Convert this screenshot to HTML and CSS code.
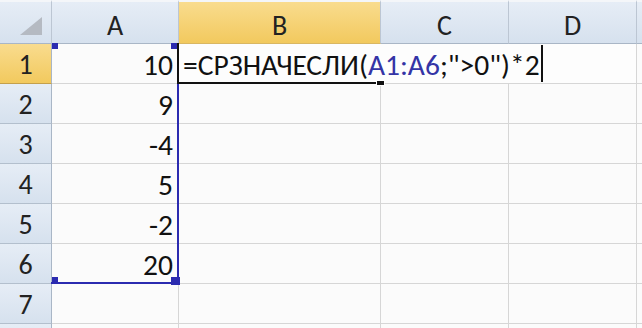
FILE: index.html
```html
<!DOCTYPE html>
<html lang="ru">
<head>
    <meta charset="UTF-8">
    <title>СРЗНАЧЕСЛИ</title>
    <link rel="stylesheet" href="styles.css">
</head>
<body>
    <div class="sheet">
        <!-- заголовки столбцов -->
        <div class="hd corner">
            <svg width="24" height="19" viewBox="0 0 24 19"><polygon points="23,0 23,18 1,18" fill="#b5bac2"/></svg>
        </div>
        <div class="hd col">A</div>
        <div class="hd col sel">B</div>
        <div class="hd col">C</div>
        <div class="hd col">D</div>
        <div class="hd col"></div>

        <!-- строка 1 -->
        <div class="hd row sel">1</div>
        <div class="cell num">10</div>
        <div class="cell wide"><span class="f">=СРЗНАЧЕСЛИ(</span><span class="ref">A1:A6</span><span class="f">;"&gt;0")*2</span><span class="caret"></span></div>
        <div class="cell"></div>

        <div class="hd row">2</div>
        <div class="cell num">9</div>
        <div class="cell"></div><div class="cell"></div><div class="cell"></div><div class="cell"></div>

        <div class="hd row">3</div>
        <div class="cell num">-4</div>
        <div class="cell"></div><div class="cell"></div><div class="cell"></div><div class="cell"></div>

        <div class="hd row">4</div>
        <div class="cell num">5</div>
        <div class="cell"></div><div class="cell"></div><div class="cell"></div><div class="cell"></div>

        <div class="hd row">5</div>
        <div class="cell num">-2</div>
        <div class="cell"></div><div class="cell"></div><div class="cell"></div><div class="cell"></div>

        <div class="hd row">6</div>
        <div class="cell num">20</div>
        <div class="cell"></div><div class="cell"></div><div class="cell"></div><div class="cell"></div>

        <div class="hd row">7</div>
        <div class="cell"></div><div class="cell"></div><div class="cell"></div><div class="cell"></div><div class="cell"></div>

        <div class="hd row"></div>
        <div class="cell"></div><div class="cell"></div><div class="cell"></div><div class="cell"></div><div class="cell"></div>

        <!-- выделенный диапазон A1:A6 -->
        <div class="range">
            <i class="h tl"></i><i class="h tr"></i><i class="h bl"></i><i class="h br"></i>
        </div>
        <!-- активная ячейка B1 -->
        <div class="active"><i class="fill"></i></div>
    </div>
</body>
</html>
```

FILE: styles.css
```css
body {
    margin: 0;
    background: #fbfbfb;
    overflow: hidden;
}
.sheet {
    position: relative;
    display: grid;
    grid-template-columns: 52px 127px 202px 128px 128px 20px;
    grid-template-rows: 44px repeat(8, 40px);
    width: 642px;
    height: 328px;
    overflow: hidden;
    font-family: Carlito, "Liberation Sans Narrow", "Liberation Sans", sans-serif;
    color: #111;
}
.sheet > div {
    box-sizing: border-box;
}
.hd {
    display: flex;
    align-items: center;
    justify-content: center;
    background: linear-gradient(#e6edf6, #d6e1ee);
    border-right: 1px solid #bcc6d3;
    border-bottom: 1px solid #b3bfcd;
    font-size: 28px;
    color: #222;
}
.hd.col {
    padding-top: 6px;
    border-top: 2px solid #f4f6f9;
    border-bottom-color: #a9b6c6;
}
.hd.corner {
    border-top: 2px solid #f4f6f9;
    border-bottom-color: #a9b6c6;
    justify-content: flex-end;
    align-items: flex-end;
    padding: 0 8px 7px 0;
}
.hd.row {
    padding-top: 2px;
    border-right-color: #a9b6c6;
}
.hd.sel {
    background: linear-gradient(#f9dc8e, #f2c95e);
}
.hd.row.sel {
    border-bottom-color: #c4a04c;
}
.hd.col.sel {
    border-bottom-color: #d9b763;
}
.cell {
    border-right: 1px solid #d6d6d6;
    border-bottom: 1px solid #d6d6d6;
    font-size: 29.5px;
    display: flex;
    align-items: center;
    padding-top: 2px;
    white-space: nowrap;
}
.num {
    justify-content: flex-end;
    padding-right: 5px;
}
.wide {
    grid-column: span 3;
    padding-left: 4px;
    background: #fdfdfd;
}
.ref {
    color: #3434a6;
}
.caret {
    display: inline-block;
    width: 2px;
    height: 37px;
    margin-left: 1px;
    margin-top: -2px;
    background: #111;
}
.range {
    position: absolute;
    left: 51px;
    top: 43px;
    width: 128px;
    height: 241px;
    box-sizing: border-box;
    border-right: 2px solid #2b2bb0;
    border-bottom: 2px solid #2b2bb0;
}
.h {
    position: absolute;
    width: 6px;
    height: 6px;
    background: #2b2bb0;
}
.h.tl { left: 1px; top: 0; }
.h.tr { right: 0; top: 0; }
.h.bl { left: 1px; bottom: -1px; }
.h.br { right: -3px; bottom: -3px; width: 9px; height: 8px; }
.active {
    position: absolute;
    left: 177px;
    top: 43px;
    width: 201px;
    height: 41px;
    box-sizing: border-box;
    border-left: 2px solid #111;
    border-bottom: 2px solid #111;
}
.fill {
    position: absolute;
    right: -7px;
    bottom: -4px;
    width: 7px;
    height: 4px;
    background: #111;
    border: 1px solid #fff;
}
```
